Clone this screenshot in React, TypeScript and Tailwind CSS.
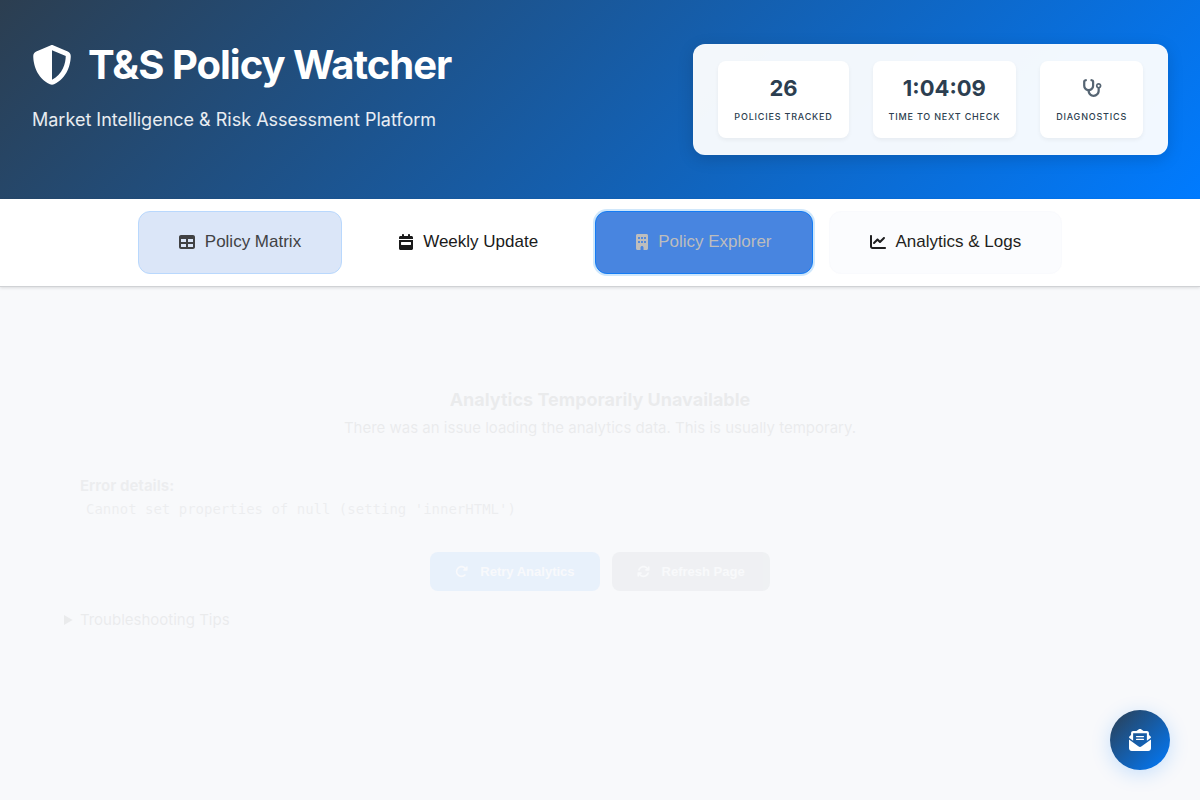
import type { ReactNode } from 'react';
import {
  FaShieldHalved,
  FaStethoscope,
  FaTable,
  FaCalendarWeek,
  FaBuilding,
  FaChartLine,
  FaRotateRight,
  FaArrowsRotate,
  FaEnvelopeOpenText,
} from 'react-icons/fa6';

function Stat({ value, label }: { value: ReactNode; label: string }) {
  return (
    <div className="flex flex-col items-center rounded-lg bg-white px-4 pt-3 pb-3.5 shadow-[0_2px_4px_rgba(0,0,0,0.05)]">
      <div className="flex h-[30px] items-center text-[22px] font-bold text-[#2c3e50]">{value}</div>
      <div className="mt-1.5 text-[9px] leading-[15px] font-medium tracking-[0.8px] text-[#2c3e50] uppercase">{label}</div>
    </div>
  );
}

const tabs = [
  {
    label: 'Policy Matrix',
    icon: FaTable,
    iconWidth: 'w-4',
    look: 'border-[#b9d8fd] bg-[#dbe6f8] text-[#414244]',
  },
  {
    label: 'Weekly Update',
    icon: FaCalendarWeek,
    iconWidth: 'w-3.5',
    look: 'border-transparent bg-white text-[#1a1a1a]',
  },
  {
    label: 'Policy Explorer',
    icon: FaBuilding,
    iconWidth: 'w-3',
    look: 'border-[#147cf5] bg-[#4885e0] text-[#bdbdbd] ring-2 ring-[#cfe7fb]',
  },
  {
    label: 'Analytics & Logs',
    icon: FaChartLine,
    iconWidth: 'w-4',
    look: 'border-[#f9fafd] bg-[#fbfcfe] text-[#1f1f20]',
  },
];

export default function App() {
  return (
    <div className="min-h-screen bg-[#f8f9fb] font-[Inter,sans-serif] text-[#1a1a1a]">
      <header className="flex items-start justify-between bg-[linear-gradient(135deg,#2c3e50_0%,#007bff_100%)] px-8 pt-11 pb-11">
        <div>
          <h1 className="flex items-center gap-4 text-[40px] leading-[42px] font-bold tracking-tight text-white">
            <FaShieldHalved />
            T&amp;S Policy Watcher
          </h1>
          <p className="mt-5 text-lg leading-7 text-white/90">Market Intelligence &amp; Risk Assessment Platform</p>
        </div>
        <div className="flex gap-6 rounded-xl border border-white/20 bg-white/95 px-6 py-4 shadow-[0_4px_16px_rgba(0,0,0,0.15)]">
          <Stat value="26" label="Policies Tracked" />
          <Stat value="1:04:09" label="Time to Next Check" />
          <Stat value={<FaStethoscope className="size-5 text-[#566573]" />} label="Diagnostics" />
        </div>
      </header>

      <nav className="flex justify-center gap-4 border-b border-[#d0d2d5] bg-white py-3 shadow-[0_1px_3px_rgba(0,0,0,0.12)]">
        {tabs.map(({ label, icon: Icon, iconWidth, look }) => (
          <button
            key={label}
            className={`flex h-[63px] items-center gap-2.5 rounded-xl border px-10 pb-px font-['Liberation_Sans',sans-serif] text-[17px] ${look}`}
          >
            <Icon className={`h-4 ${iconWidth}`} />
            {label}
          </button>
        ))}
      </nav>

      <main className="px-16 pt-[99px] opacity-6">
        <div className="text-center">
          <h2 className="text-lg leading-7 font-bold">Analytics Temporarily Unavailable</h2>
          <p className="text-[15px] leading-7">There was an issue loading the analytics data. This is usually temporary.</p>
        </div>
        <div className="mt-8 px-4 opacity-80">
          <div className="text-[15px] leading-6 font-bold">Error details:</div>
          <code className="block px-1.5 font-['DejaVu_Sans_Mono',monospace] text-sm leading-[22px]">
            Cannot set properties of null (setting 'innerHTML')
          </code>
        </div>
        <div className="mt-8 flex justify-center gap-3 font-['Liberation_Sans',sans-serif] text-[13px] font-bold text-white">
          <button className="flex h-[39px] items-center gap-3 rounded-lg bg-[#007bff] px-[25px]">
            <FaRotateRight className="size-[13px]" />
            Retry Analytics
          </button>
          <button className="flex h-[39px] items-center gap-3 rounded-lg bg-[#6c757d] px-[25px]">
            <FaArrowsRotate className="size-[13px]" />
            Refresh Page
          </button>
        </div>
        <details className="mt-4 text-[15px] leading-[26px]">
          <summary>Troubleshooting Tips</summary>
          <p>Reload the page, then check the connection.</p>
        </details>
      </main>

      <button
        aria-label="Subscribe to updates"
        className="fixed right-[30px] bottom-[30px] flex size-15 items-center justify-center rounded-full bg-[linear-gradient(135deg,#2c3e50_0%,#007bff_100%)] text-white shadow-[0_4px_20px_rgba(0,123,255,0.2)]"
      >
        <FaEnvelopeOpenText className="size-[22px]" />
      </button>
    </div>
  );
}
